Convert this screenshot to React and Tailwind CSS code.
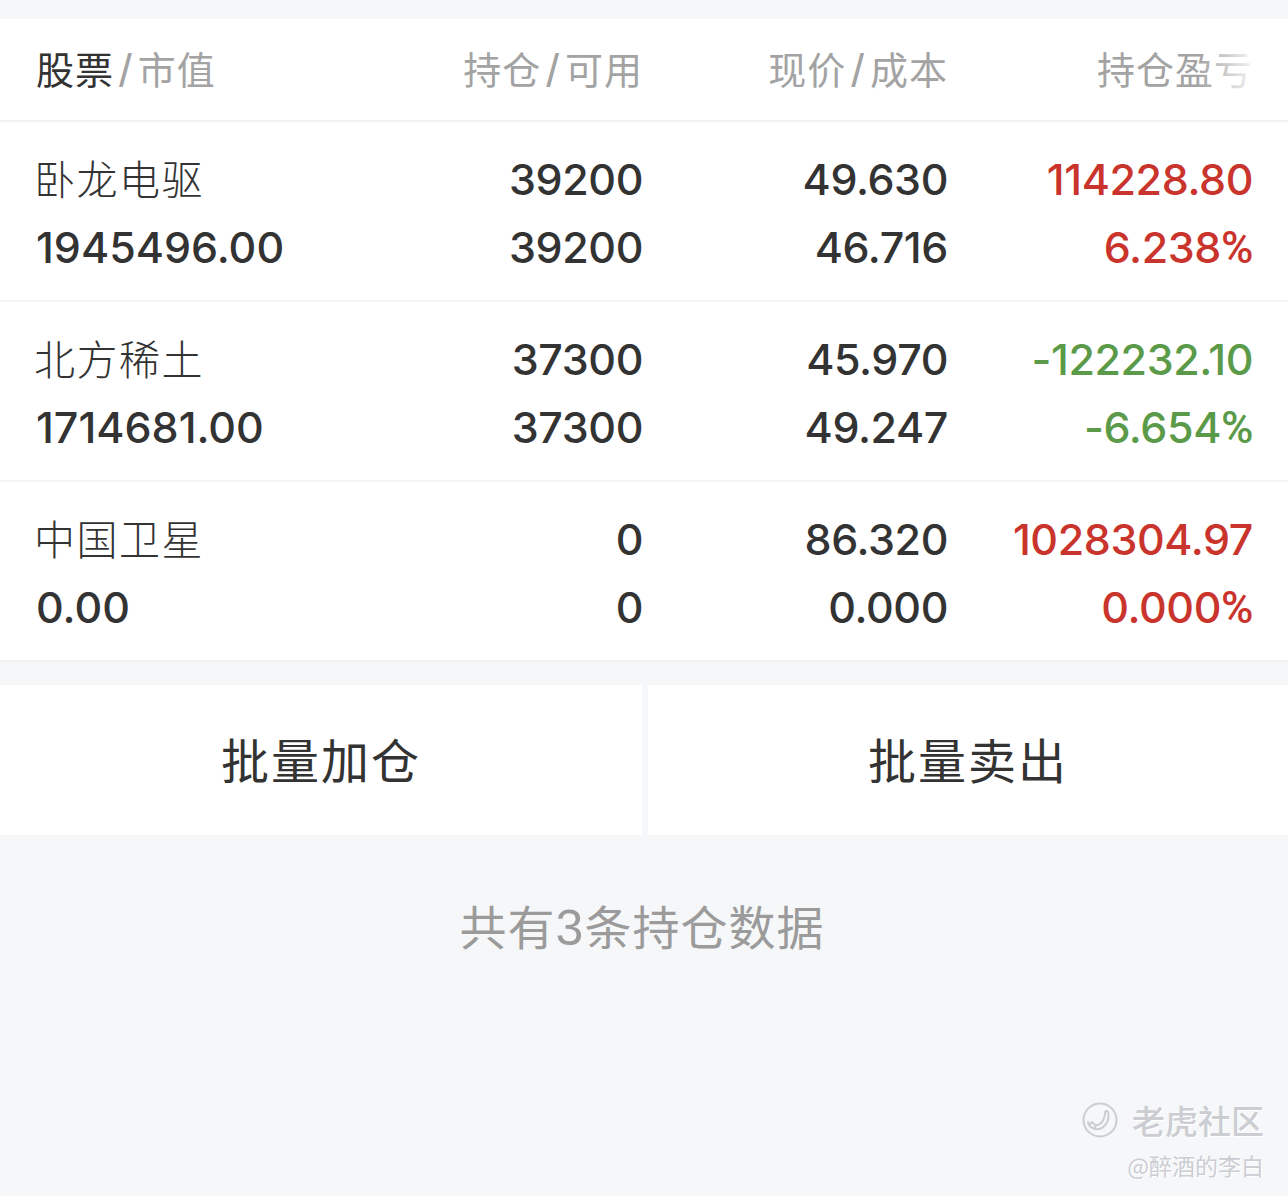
const rows = [
  { name: '卧龙电驱', value: '1945496.00', qty: '39200', avail: '39200', price: '49.630', cost: '46.716', pl: '114228.80', pct: '6.238', color: 'text-[#c9342c]' },
  { name: '北方稀土', value: '1714681.00', qty: '37300', avail: '37300', price: '45.970', cost: '49.247', pl: '-122232.10', pct: '-6.654', color: 'text-[#5a9a48]' },
  { name: '中国卫星', value: '0.00', qty: '0', avail: '0', price: '86.320', cost: '0.000', pl: '1028304.97', pct: '0.000', color: 'text-[#c9342c]' },
];

const cjk = "font-['Noto_Sans_CJK_SC',sans-serif]";
const num = "font-['Inter','Noto_Sans_CJK_SC',sans-serif]";
const cols = 'grid grid-cols-[302px_305px_305px_305px] px-[36px]';

function HeadCell({ a, b, dark }) {
  return (
    <div className={`flex items-center gap-[5px] h-[60px] text-[38px] leading-[56px] tracking-[1px] text-[#a3a3a3] ${cjk} ${dark ? '' : 'justify-end'}`}>
      <span className={dark ? 'text-[#333333]' : ''}>{a}</span>
      <span className="font-['Liberation_Sans',sans-serif] text-[46px] leading-[56px] mt-[5px]">/</span>
      <span>{b}</span>
    </div>
  );
}

export default function App() {
  return (
    <div className="w-[1288px] h-[1196px] relative overflow-hidden bg-[#f6f7f9] pt-[19px]">
      {/* header */}
      <div className="relative bg-white h-[103px] border-b-2 border-[#f2f2f2] pt-[19px]">
        <div className={`${cols} items-center`}>
          <HeadCell a="股票" b="市值" dark />
          <HeadCell a="持仓" b="可用" />
          <HeadCell a="现价" b="成本" />
          <div className={`text-right text-[38px] leading-[56px] tracking-[1px] text-[#a3a3a3] ${cjk}`}>持仓盈亏</div>
        </div>
        <div className="absolute top-0 bottom-0 right-0 w-[90px] bg-gradient-to-r from-white/0 to-white to-70%"></div>
      </div>

      {/* rows */}
      <div className="bg-white">
        {rows.map((r) => (
          <div key={r.name} className={`${cols} h-[180px] items-center border-b-2 border-[#f4f4f4] text-[#333333] ${num} text-[43px] tracking-[-0.4px] leading-[68px] pt-[4px]`}>
            <div>
              <div className={`${cjk} text-[41px] font-light tracking-[1.5px] -ml-[2px] -mt-[2px] mb-[2px]`}>{r.name}</div>
              <div className="font-medium tracking-[0px]">{r.value}</div>
            </div>
            <div className="text-right font-medium">
              <div>{r.qty}</div>
              <div>{r.avail}</div>
            </div>
            <div className="text-right font-medium">
              <div>{r.price}</div>
              <div>{r.cost}</div>
            </div>
            <div className={`text-right font-medium ${r.color}`}>
              <div>{r.pl}</div>
              <div>{r.pct}<span className="font-['Roboto',sans-serif] text-[44px]">%</span></div>
            </div>
          </div>
        ))}
      </div>

      {/* buttons */}
      <div className={`mt-[23px] flex h-[150px] gap-[6px] text-[48px] text-[#333333] ${cjk}`}>
        <button className="w-[642px] bg-white tracking-[2px] pb-[4px]">批量加仓</button>
        <button className="flex-1 bg-white tracking-[2px] pb-[4px]">批量卖出</button>
      </div>

      <p className={`mt-[58px] text-center text-[47px] leading-[64px] tracking-[1px] text-[#9b9b9b] ${cjk} pr-[4px]`}>共有<span className="font-['Liberation_Sans',sans-serif] text-[50px]">3</span>条持仓数据</p>

      {/* watermark */}
      <div className={`absolute right-[24px] bottom-[17px] flex flex-col items-end gap-[11px] text-[#cbcdd2] ${cjk}`}>
        <div className="flex items-center gap-[14px]">
          <svg width="36" height="36" viewBox="0 0 36 36" fill="none" stroke="#cbcdd2" strokeWidth="2" strokeLinecap="round">
            <circle cx="18" cy="18" r="16.5" />
            <path d="M6 20c1 6 8 9 14 6 5-3 8-10 6-16-1-2-3-1-3 1 0 4-2 9-5 11-3 2-6 1-7-1" />
            <path d="M8 22l2-2M13 26l1-3" />
          </svg>
          <span className="text-[33px] leading-[40px] font-medium [text-shadow:1px_1px_0_#ffffff]">老虎社区</span>
        </div>
        <span className="text-[23px] leading-[28px] [text-shadow:1px_1px_0_#ffffff]">@醉酒的李白</span>
      </div>
    </div>
  );
}
